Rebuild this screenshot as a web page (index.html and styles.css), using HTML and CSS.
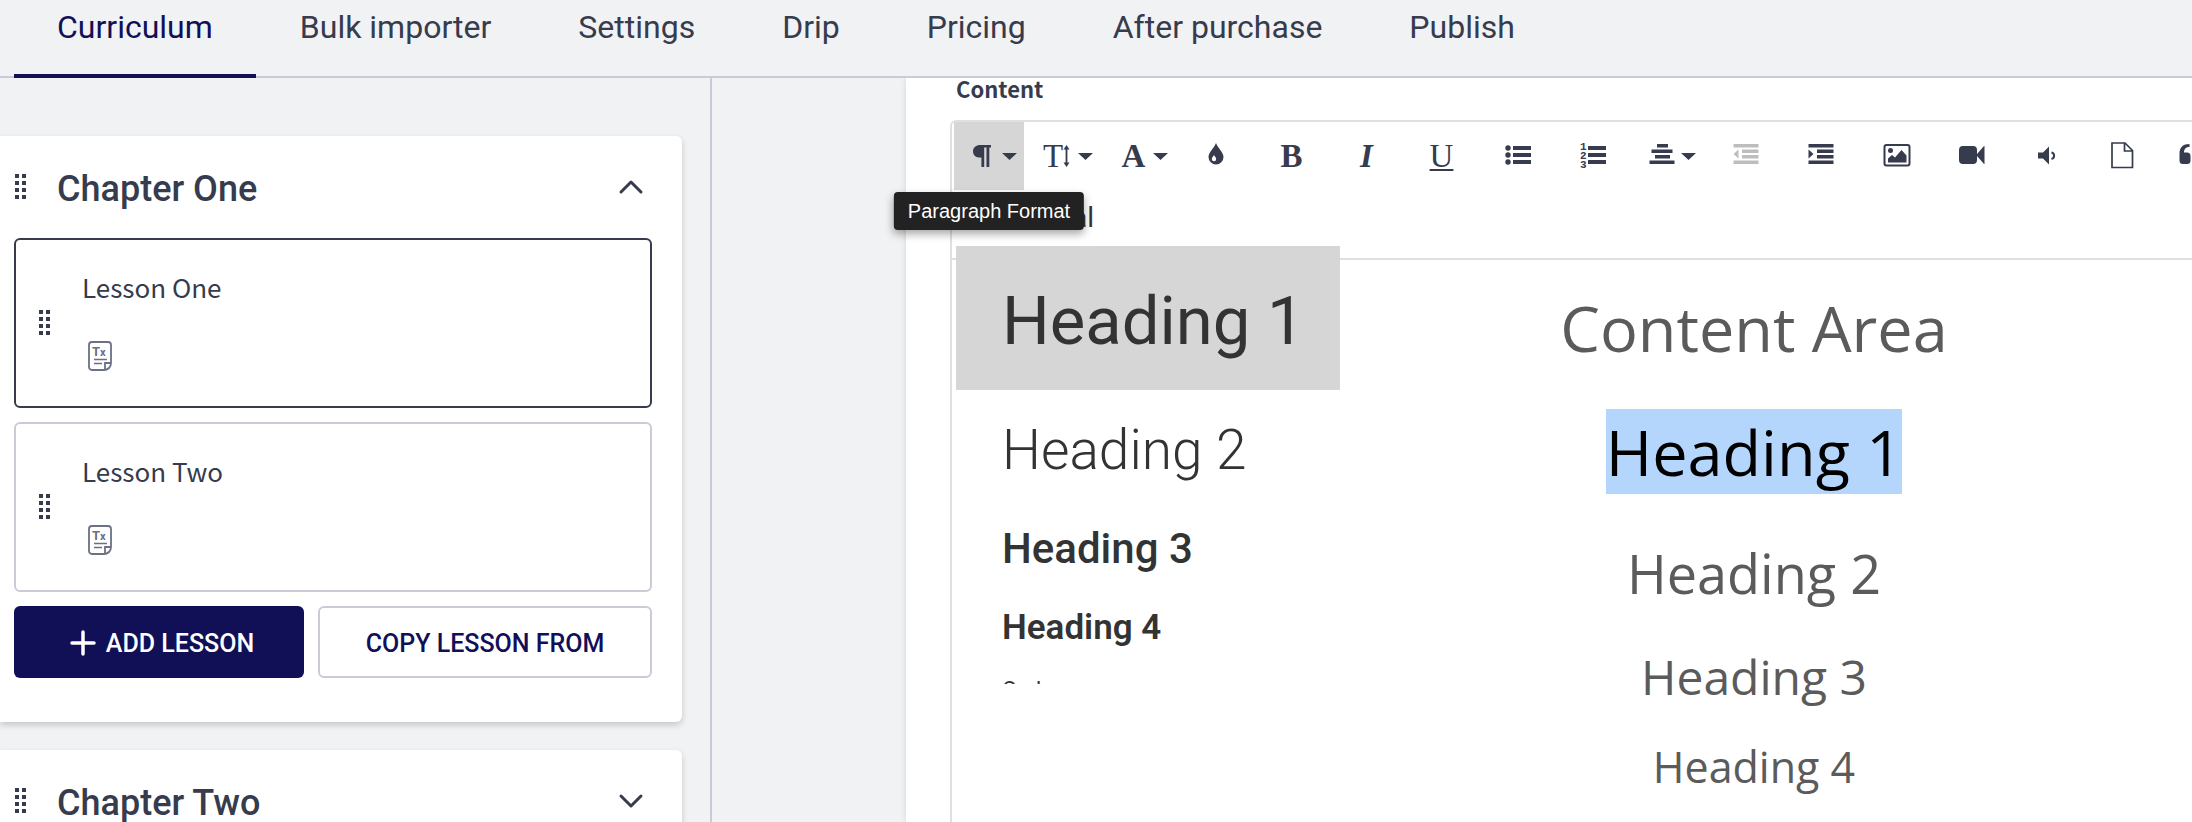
FILE: index.html
```html
<!DOCTYPE html>
<html lang="en">
<head>
<meta charset="utf-8">
<title>Curriculum</title>
<link rel="stylesheet" href="styles.css">
</head>
<body class="app">
<svg class="sprite" aria-hidden="true">
  <symbol id="drag" viewBox="0 0 12 26"><path d="M0 0h4v4H0zM7 0h4v4H7zM0 7h4v4H0zM7 7h4v4H7zM0 14h4v4H0zM7 14h4v4H7zM0 21h4v4H0zM7 21h4v4H7z" fill="currentColor"/></symbol>
  <symbol id="caret" viewBox="0 0 15 7"><path d="M0 0h15L7.500 7z" fill="currentColor"/></symbol>
  <symbol id="lesson-text" viewBox="0 0 24 30">
    <path d="M4 1h16a3 3 0 0 1 3 3v18c0 4-3 7-7 7H4a3 3 0 0 1-3-3V4a3 3 0 0 1 3-3zM17 28v-6h6" fill="none" stroke="currentColor" stroke-width="1.800"/>
    <path d="M6 18.500h13M6 22.500h8" stroke="currentColor" stroke-width="1.600"/>
    <text x="4" y="15" font-family="Roboto, sans-serif" font-weight="700" font-size="13" fill="currentColor">T<tspan font-size="11">x</tspan></text>
  </symbol>
</svg>

<nav class="tabs" aria-label="Course sections">
  <a class="tab tab-active" href="#" aria-current="page">Curriculum</a>
  <a class="tab" href="#">Bulk importer</a>
  <a class="tab" href="#">Settings</a>
  <a class="tab" href="#">Drip</a>
  <a class="tab" href="#">Pricing</a>
  <a class="tab" href="#">After purchase</a>
  <a class="tab" href="#">Publish</a>
</nav>

<div class="workspace">
  <aside class="sidebar">
    <section class="chapter">
      <header class="chapter-head">
        <svg class="drag"><use href="#drag"/></svg>
        <h2 class="chapter-title">Chapter One</h2>
        <button class="toggle" aria-label="Collapse chapter"><svg class="chevron" viewBox="0 0 24 14"><path d="M2 12 12 2l10 10"/></svg></button>
      </header>
      <div class="lessons">
        <article class="lesson lesson-active">
          <svg class="drag"><use href="#drag"/></svg>
          <div class="lesson-body">
            <h3 class="lesson-title">Lesson One</h3>
            <svg class="lesson-icon"><use href="#lesson-text"/></svg>
          </div>
        </article>
        <article class="lesson">
          <svg class="drag"><use href="#drag"/></svg>
          <div class="lesson-body">
            <h3 class="lesson-title">Lesson Two</h3>
            <svg class="lesson-icon"><use href="#lesson-text"/></svg>
          </div>
        </article>
      </div>
      <div class="actions">
        <button class="btn btn-primary"><svg class="plus" viewBox="0 0 26 26"><path d="M13 2v22M2 13h22"/></svg>ADD LESSON</button>
        <button class="btn btn-outline">COPY LESSON FROM</button>
      </div>
    </section>
    <section class="chapter">
      <header class="chapter-head">
        <svg class="drag"><use href="#drag"/></svg>
        <h2 class="chapter-title">Chapter Two</h2>
        <button class="toggle" aria-label="Expand chapter"><svg class="chevron" viewBox="0 0 24 14"><path d="M2 2l10 10L22 2"/></svg></button>
      </header>
    </section>
  </aside>

  <main class="stage">
    <div class="panel">
      <div class="panel-label" id="content-label">Content</div>
      <div class="editor">
        <div class="toolbar" role="toolbar">
          <div class="tool-wrap">
            <button class="tool tool-open" aria-label="Paragraph Format" aria-expanded="true"><svg class="pilcrow" viewBox="0 0 18 22"><path d="M7.500 0H18v2.600h-1.700V22h-2.800V2.600h-2.300V22H8.400V12.500C3 12.800 0 10.200 0 6.400 0 2.500 3 0 7.500 0z" fill="currentColor"/></svg><svg class="caret"><use href="#caret"/></svg></button>
            <div class="tooltip" role="tooltip">Paragraph Format</div>
            <div class="menu">
              <button class="menu-item format-normal">Normal</button>
              <button class="menu-item format-h1">Heading 1</button>
              <button class="menu-item format-h2">Heading 2</button>
              <button class="menu-item format-h3">Heading 3</button>
              <button class="menu-item format-h4">Heading 4</button>
              <button class="menu-item format-code">Code</button>
            </div>
          </div>
          <button class="tool tool-size" aria-label="Font Size"><span class="glyph">T</span><svg class="updown" viewBox="0 0 7 22"><path d="M3.500 3v16" stroke="currentColor" stroke-width="1.800"/><path d="M3.500 0L6.500 4.500h-6zM3.500 22l3-4.500h-6z" fill="currentColor"/></svg><svg class="caret"><use href="#caret"/></svg></button>
          <button class="tool tool-font" aria-label="Font Family"><span class="glyph glyph-bold">A</span><svg class="caret"><use href="#caret"/></svg></button>
          <button class="tool" aria-label="Text Color"><svg class="icon" viewBox="1 2 28 28"><path d="M14 3c1.500 5 7.500 9 7.500 14a7.500 7.500 0 0 1-15 0C6.500 12 12.500 8 14 3z" fill="currentColor"/><path d="M12 15c.6 1.500 2.200 2.300 2.200 4a2.200 2.200 0 0 1-4.400 0c0-1.700 1.600-2.500 2.200-4z" fill="#fff"/></svg></button>
          <button class="tool" aria-label="Bold"><span class="glyph glyph-bold">B</span></button>
          <button class="tool" aria-label="Italic"><span class="glyph glyph-italic">I</span></button>
          <button class="tool" aria-label="Underline"><span class="glyph glyph-underline">U</span></button>
          <button class="tool" aria-label="Unordered List"><svg class="icon" viewBox="0 0 28 28"><g fill="currentColor"><circle cx="5" cy="6" r="2.700"/><circle cx="5" cy="13" r="2.700"/><circle cx="5" cy="20" r="2.700"/><path d="M10 4h18v4H10zM10 11h18v4H10zM10 18h18v4H10z"/></g></svg></button>
          <button class="tool" aria-label="Ordered List"><svg class="icon" viewBox="0 0 28 28"><g fill="currentColor"><path d="M10 4h18v4H10zM10 11h18v4H10zM10 18h18v4H10z"/><g font-family="Liberation Mono, monospace" font-weight="700" font-size="11"><text x="2" y="8">1</text><text x="2" y="17">2</text><text x="2" y="26">3</text></g></g></svg></button>
          <button class="tool tool-align" aria-label="Align"><svg class="icon" viewBox="0 2 28 28"><path d="M9 4h11v3.500H9zM3.500 9.500h21V13h-21zM7 15h15v3.500H7zM1.500 20.500h25V24h-25z" fill="currentColor"/></svg><svg class="caret"><use href="#caret"/></svg></button>
          <button class="tool" aria-label="Decrease Indent" disabled><svg class="icon" viewBox="1 2 28 28"><path d="M1.500 4h25v3.500h-25zM10 9.500h16.500V13H10zM10 15h16.500v3.500H10zM1.500 20.500h25V24h-25zM6.500 9.500v9l-5-4.500z" fill="currentColor"/></svg></button>
          <button class="tool" aria-label="Increase Indent"><svg class="icon" viewBox="1 2 28 28"><path d="M1.500 4h25v3.500h-25zM10 9.500h16.500V13H10zM10 15h16.500v3.500H10zM1.500 20.500h25V24h-25zM1.500 9.500v9l5-4.500z" fill="currentColor"/></svg></button>
          <button class="tool" aria-label="Insert Image"><svg class="icon" viewBox="0 1 28 28"><rect x="1.500" y="4" width="25" height="20.500" rx="2" fill="none" stroke="currentColor" stroke-width="2"/><circle cx="7.500" cy="9.500" r="2.500" fill="currentColor"/><path d="M5 21.500v-4l4-3.500 3 2.500L18.500 9l5 5.500v7z" fill="currentColor"/></svg></button>
          <button class="tool" aria-label="Insert Video"><svg class="icon" viewBox="0 1 28 28"><rect x="1" y="5" width="18" height="18" rx="4" fill="currentColor"/><path d="M19 13l7-8h.5v18H26l-7-8z" fill="currentColor"/></svg></button>
          <button class="tool" aria-label="Insert Audio"><svg class="icon" viewBox="0 0 28 28"><path d="M5 10.500h5l6-6v18l-6-6H5z" fill="currentColor"/><path d="M18.500 10.500c3.500 1 3.500 5.500 0 6.500" fill="none" stroke="currentColor" stroke-width="2"/></svg></button>
          <button class="tool" aria-label="Insert File"><svg class="icon" viewBox="0 1 28 28"><path d="M4 2h13l7.500 7.500V26.500H4zM16.500 2v8h8" fill="none" stroke="currentColor" stroke-width="1.700"/></svg></button>
          <button class="tool" aria-label="Quote"><svg class="icon" viewBox="4 2 28 28"><path d="M10.500 4v3C7 7 5 9 5 12.500h3a3.500 3.500 0 0 1 3.500 3.500v4.500A3.500 3.500 0 0 1 8 24H4a3.500 3.500 0 0 1-3.500-3.500V14C.5 7 4 4 10.500 4zM24.500 4v3C21 7 19 9 19 12.500h3a3.500 3.500 0 0 1 3.500 3.500v4.500A3.500 3.500 0 0 1 22 24h-4a3.500 3.500 0 0 1-3.500-3.500V14c0-7 3.500-10 10-10z" fill="currentColor"/></svg></button>
        </div>
        <div class="document" contenteditable="true" role="textbox" aria-multiline="true" aria-labelledby="content-label" spellcheck="false">
          <h1 class="doc-line doc-h1">Content Area</h1>
          <h1 class="doc-line doc-h1"><mark class="selected">Heading 1</mark></h1>
          <h2 class="doc-line doc-h2">Heading 2</h2>
          <h3 class="doc-line doc-h3">Heading 3</h3>
          <h4 class="doc-line doc-h4">Heading 4</h4>
        </div>
      </div>
    </div>
  </main>
</div>
</body>
</html>
```
FILE: styles.css
```css
* { box-sizing: border-box; }

.app {
  margin: 0;
  height: 100vh;
  display: flex;
  flex-direction: column;
  overflow: hidden;
  background: #f1f2f4;
  color: #363b4d;
  font-family: Roboto, sans-serif;
}
.sprite { display: none; }
button { font: inherit; color: inherit; border: 0; background: none; padding: 0; cursor: pointer; }
svg { display: block; flex: none; overflow: visible; }

.tabs {
  flex: none;
  display: flex;
  gap: 1px;
  padding-left: 14px;
  border-bottom: 2px solid #c9cbd7;
}
.tab {
  margin-bottom: -2px;
  padding: 9px 43px 29px;
  border-bottom: 4px solid transparent;
  color: inherit;
  font-size: 32px;
  line-height: 36px;
  text-decoration: none;
  white-space: nowrap;
}
.tab-active { color: #111057; border-color: #111057; }

.workspace { flex: 1; min-height: 0; display: flex; }
.sidebar {
  flex: none;
  width: 712px;
  padding: 58px 28px 0 0;
  border-right: 2px solid #c9cbd7;
  display: flex;
  flex-direction: column;
  gap: 28px;
  overflow: hidden;
}
.chapter {
  flex: none;
  padding: 24px 30px 44px 14px;
  background: #fff;
  border-radius: 0 6px 6px 0;
  box-shadow: 0 3px 6px rgba(0, 0, 0, .18);
}
.chapter-head { display: flex; align-items: center; height: 54px; margin-bottom: 24px; padding-left: 1px; }
.drag { width: 12px; height: 26px; }
.chapter-title { flex: 1; margin: 0 0 0 30px; padding-top: 3px; font-size: 36px; line-height: 50px; font-weight: 500; }
.toggle { width: 42px; height: 42px; display: grid; place-items: center; }
.chevron { width: 24px; height: 14px; fill: none; stroke: currentColor; stroke-width: 3; stroke-linecap: round; stroke-linejoin: round; }

.lessons { display: flex; flex-direction: column; gap: 14px; }
.lesson {
  display: flex;
  align-items: center;
  gap: 31px;
  height: 170px;
  padding: 0 23px;
  border: 2px solid #c9cbd7;
  border-radius: 6px;
}
.lesson-active { border-color: #363b4d; }
.lesson-body { display: flex; flex-direction: column; gap: 35px; padding-bottom: 8px; }
.lesson-title { margin: 0; font: 400 26px/38px "Noto Sans CJK SC", "Noto Sans", sans-serif; }
.lesson-icon { width: 24px; height: 30px; margin-left: 6px; color: #6b7083; }

.actions { display: flex; gap: 14px; margin-top: 14px; }
.btn {
  display: flex;
  align-items: center;
  justify-content: center;
  gap: 10px;
  height: 72px;
  padding-top: 2px;
  border-radius: 6px;
  font-size: 25px;
  font-weight: 500;
  white-space: nowrap;
}
.btn-primary { flex: 0 0 290px; padding-left: 6px; background: #111057; color: #fff; }
.btn-outline { flex: 1; border: 2px solid #c9cbd7; color: #111057; }
.plus { width: 26px; height: 26px; stroke: currentColor; stroke-width: 3.500; stroke-linecap: round; }

.stage { flex: 1; min-width: 0; padding-left: 194px; overflow: hidden; }
.panel {
  height: 100%;
  margin-right: -410px;
  padding: 0 44px;
  display: flex;
  flex-direction: column;
  background: #fff;
  box-shadow: 0 0 6px rgba(0, 0, 0, .12);
}
.panel-label { flex: none; padding: 0 6px; height: 42px; font: 700 22px/20px "Noto Sans CJK SC", "Noto Sans", sans-serif; }
.editor {
  flex: 1;
  border: 2px solid #e0e0e0;
  border-bottom: 0;
  border-radius: 6px 6px 0 0;
}
.toolbar {
  display: flex;
  align-items: flex-start;
  gap: 4px;
  height: 138px;
  padding-left: 2px;
  border-bottom: 2px solid #e0e0e0;
}
.tool-wrap { position: relative; flex: none; }
.tool { flex: none; width: 71px; height: 68px; display: flex; align-items: center; justify-content: center; }
.tool:disabled { color: #bdbdbd; }
.tool-open { width: 70px; gap: 11px; padding-left: 12px; background: #d6d6d6; }
.tool-size { width: 78px; padding-left: 2px; }
.tool-size .caret { margin-left: 8px; }
.tool-font { width: 67px; gap: 8px; padding-left: 3px; }
.tool-align { width: 76px; gap: 5px; padding-left: 5px; }
.caret { width: 15px; height: 7px; }
.pilcrow { width: 18px; height: 22px; }
.updown { width: 7px; height: 22px; }
.icon { width: 28px; height: 28px; }
.glyph { font-family: "Liberation Serif", serif; font-size: 33px; line-height: 32px; }
.glyph-bold { font-weight: 700; }
.glyph-italic { font-style: italic; font-weight: 700; }
.glyph-underline { text-decoration: underline; text-decoration-thickness: 2px; text-underline-offset: 2px; }

.tooltip {
  position: absolute;
  z-index: 3;
  top: 70px;
  left: 50%;
  transform: translateX(-50%);
  padding: 0 14px;
  border-radius: 4px;
  background: #222;
  color: #fff;
  font: 20px/38px "Liberation Sans", Arial, sans-serif;
  white-space: nowrap;
  box-shadow: 0 4px 8px rgba(0, 0, 0, .35);
}
.menu {
  position: absolute;
  z-index: 2;
  top: 68px;
  left: 2px;
  width: 384px;
  height: 494px;
  overflow: hidden;
  background: #fff;
  color: #333;
}
.menu-item { display: block; width: 100%; padding: 0 46px; text-align: left; white-space: nowrap; }
.format-normal { font-size: 28px; line-height: 56px; }
.format-h1 { padding-top: 6px; font-size: 67px; line-height: 138px; background: #d6d6d6; }
.format-h2 { font-size: 55px; line-height: 120px; font-weight: 300; }
.format-h3 { font-size: 42px; line-height: 78px; font-weight: 500; }
.format-h4 { font-size: 35px; line-height: 80px; font-weight: 600; }
.format-code { font-size: 22px; line-height: 44px; }

.document {
  padding-top: 24px;
  outline: 0;
  color: #5b5b5b;
  font-family: "Open Sans", sans-serif;
  text-align: center;
}
.doc-line { margin: 0 0 37px; font-weight: 400; }
.doc-h1 { font-size: 63px; line-height: 87px; }
.doc-h2 { margin: 40px 0 33px; font-size: 54px; line-height: 76px; }
.doc-h3 { margin-bottom: 29px; font-size: 48px; line-height: 65px; }
.doc-h4 { font-size: 43px; line-height: 58px; }
.selected { background: #b4d6fc; color: #000; }
```
